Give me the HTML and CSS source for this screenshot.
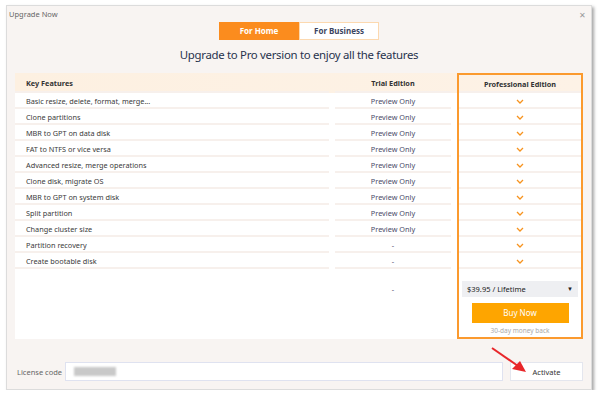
FILE: index.html
```html
<!DOCTYPE html>
<html lang="en">
<head>
  <meta charset="UTF-8" />
  <meta name="viewport" content="width=device-width, initial-scale=1.0"/>
  <title>Upgrade Now</title>
  <link rel="stylesheet" href="styles.css">
</head>
<body>

  <div class="window">
    <div class="titlebar">
      <span class="title">Upgrade Now</span>
      <span class="close">&#x2715;</span>
    </div>

    <div class="tabs">
      <span class="tab active">For Home</span>
      <span class="tab">For Business</span>
    </div>

    <h1>Upgrade to Pro version to enjoy all the features</h1>

    <div class="table">
      <div class="row head">
        <div class="cell feature">Key Features</div>
        <div class="cell trial">Trial Edition</div>
        <div class="cell pro top">Professional Edition</div>
      </div>
      <div id="rows"></div>
      <div class="row price">
        <div class="cell feature"></div>
        <div class="cell trial">-</div>
        <div class="cell pro bottom">
          <div class="select">$39.95 / Lifetime <span class="caret">&#9660;</span></div>
          <button class="buy">Buy Now</button>
          <div class="refund">30-day money back</div>
        </div>
      </div>
    </div>

    <div class="license">
      <label>License code</label>
      <div class="code"><span class="blur"></span></div>
      <button class="activate">Activate</button>
    </div>

    <svg class="arrow" width="40" height="30" viewBox="0 0 40 30">
      <line x1="2" y1="2" x2="28" y2="20" stroke="#e8262a" stroke-width="2"/>
      <polygon points="36,26 22,23 30,15" fill="#e8262a"/>
    </svg>
  </div>

  <script>
    const recursos = [
      ["Basic resize, delete, format, merge...", "Preview Only"],
      ["Clone partitions", "Preview Only"],
      ["MBR to GPT on data disk", "Preview Only"],
      ["FAT to NTFS or vice versa", "Preview Only"],
      ["Advanced resize, merge operations", "Preview Only"],
      ["Clone disk, migrate OS", "Preview Only"],
      ["MBR to GPT on system disk", "Preview Only"],
      ["Split partition", "Preview Only"],
      ["Change cluster size", "Preview Only"],
      ["Partition recovery", "-"],
      ["Create bootable disk", "-"]
    ];

    const check = `<svg width="8" height="5" viewBox="0 0 8 5"><polyline points="1,1 4,4 7,1" fill="none" stroke="#f7931e" stroke-width="1.3"/></svg>`;

    const container = document.getElementById("rows");
    recursos.forEach(r => {
      const div = document.createElement("div");
      div.className = "row";
      div.innerHTML = `
        <div class="cell feature">${r[0]}</div>
        <div class="cell trial">${r[1]}</div>
        <div class="cell pro">${check}</div>
      `;
      container.appendChild(div);
    });
  </script>
</body>
</html>
```

FILE: styles.css
```css
body {
  margin: 0;
  font-family: "Noto Sans", Arial, sans-serif;
  background-color: #ffffff;
}
.window {
  position: relative;
  box-sizing: border-box;
  width: 586px;
  height: 385px;
  margin: 5px 0 0 6px;
  padding: 0 8px;
  background-color: #f8f4f2;
  border: 1px solid #dcdcdc;
  box-shadow: 2px 2px 3px rgba(0,0,0,0.35);
}
.titlebar {
  height: 16px;
  display: flex;
  justify-content: space-between;
  align-items: center;
  margin: 0 -3px 0 -6px;
}
.title {
  font-size: 7.5px;
  color: #666;
  margin-top: -1px;
}
.close {
  font-size: 8px;
  color: #999;
}
.tabs {
  display: flex;
  justify-content: center;
}
.tab {
  box-sizing: border-box;
  width: 80px;
  height: 18px;
  line-height: 16px;
  text-align: center;
  font-size: 8px;
  font-weight: bold;
  color: #3b4460;
  background-color: #fff;
  border: 1px solid #fcd9b0;
}
.tab.active {
  background-color: #fb8c1e;
  border-color: #fb8c1e;
  color: #fff;
}
h1 {
  margin: 7px 0 10px;
  height: 16px;
  line-height: 16px;
  text-align: center;
  font-size: 11.4px;
  letter-spacing: -0.3px;
  font-weight: normal;
  color: #27324d;
}
.table {
  background-color: #fff;
}
.row {
  display: flex;
  height: 16px;
  font-size: 7.3px;
  color: #3a3a3a;
}
.row.head {
  height: 20px;
  background: linear-gradient(90deg, #fdf0e1, #fdf2e6);
  font-weight: bold;
  color: #333;
}
.cell {
  box-sizing: border-box;
  display: flex;
  align-items: center;
  box-shadow: inset 0 -2px 0 #f7f0ec;
}
.feature {
  width: 314px;
  padding-left: 11px;
}
.trial {
  width: 116px;
  margin-left: 6px;
  justify-content: center;
  color: #4a4a68;
}
.head .trial {
  color: #333;
}
.pro {
  width: 126px;
  margin-left: 6px;
  justify-content: center;
  border-left: 2px solid #fb9a2e;
  border-right: 2px solid #fb9a2e;
}
.pro.top {
  border-top: 2px solid #fb9a2e;
}
.row.price {
  height: 70px;
}
.price .cell {
  box-shadow: none;
  align-items: flex-start;
  padding-top: 15px;
}
.pro.bottom {
  border-bottom: 2px solid #fb9a2e;
  flex-direction: column;
  align-items: center;
  padding-top: 9px;
}
.select {
  box-sizing: border-box;
  width: 116px;
  height: 16px;
  padding: 0 5px;
  display: flex;
  justify-content: space-between;
  align-items: center;
  background-color: #eeeff2;
  color: #222;
  font-size: 7.5px;
}
.caret {
  font-size: 6px;
}
.buy {
  margin-top: 6px;
  width: 97px;
  height: 20px;
  border: none;
  background-color: #fea500;
  color: #fff;
  font-family: inherit;
  font-size: 8px;
}
.refund {
  margin-top: 3px;
  font-size: 6.5px;
  color: #aaa;
}
.license {
  display: flex;
  align-items: center;
  margin-top: 23px;
  margin-left: -7px;
}
.license label {
  width: 57px;
  padding-left: 9px;
  box-sizing: border-box;
  font-size: 7.5px;
  color: #666;
}
.code {
  box-sizing: border-box;
  width: 438px;
  height: 19px;
  padding-left: 8px;
  display: flex;
  align-items: center;
  background-color: #fff;
  border: 1px solid #dfe2f0;
}
.blur {
  width: 42px;
  height: 9px;
  background-color: #c9c9c9;
  filter: blur(1px);
}
.activate {
  box-sizing: border-box;
  width: 73px;
  height: 19px;
  margin-left: 7px;
  background-color: #fff;
  border: 1px solid #e4e6ee;
  font-family: inherit;
  font-size: 7.5px;
  color: #333;
}
.arrow {
  position: absolute;
  left: 483px;
  top: 340px;
}
```
